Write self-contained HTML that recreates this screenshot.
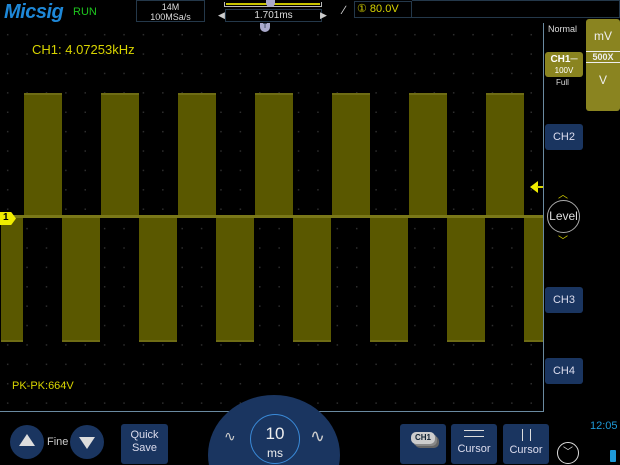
<!DOCTYPE html>
<html><head><style>
*{margin:0;padding:0;box-sizing:border-box}
html,body{width:620px;height:465px;overflow:hidden;background:#000}
#w{width:620px;height:465px;position:relative;overflow:hidden;font-family:"Liberation Sans",sans-serif}
.a{position:absolute}
.top{background:#5a5800;border-top:2px solid #6e6c14}
.bot{background:#5a5800;border-bottom:2px solid #6e6c14}
.btn{position:absolute;background:#1a3560;border-radius:3px;color:#dde;font-size:11px;text-align:center}
</style></head><body><div id="w">
<div class="a" style="left:4px;top:1px;font:italic bold 20px 'Liberation Sans';color:#1e88d8;letter-spacing:-0.5px">Micsig</div>
<div class="a" style="left:73px;top:6px;font-size:11px;color:#1ec41e">RUN</div>
<div class="a" style="left:136px;top:0;width:69px;height:22px;border:1px solid #24384a;font-size:9px;color:#ddd;text-align:center;line-height:10px;padding-top:1px">14M<br>100MSa/s</div>
<div class="a" style="left:224px;top:2px;width:98px;height:5px;border:1px solid #bbb;border-top:none"></div>
<div class="a" style="left:226px;top:3px;width:94px;height:2px;background:#c8c400"></div>
<div class="a" style="left:225px;top:9px;width:97px;height:13px;border:1px solid #24384a;font-size:10px;color:#ddd;text-align:center;line-height:12px">1.701ms</div>
<div class="a" style="left:218px;top:10px;color:#ccc;font-size:9px">◀</div>
<div class="a" style="left:320px;top:10px;color:#ccc;font-size:9px">▶</div>
<div class="a" style="left:266px;top:0;width:9px;height:7px;background:#aac;border-radius:0 0 4px 4px"></div>
<div class="a" style="left:343px;top:3px;color:#ddd;font-size:12px">∕</div>
<div class="a" style="left:354px;top:1px;width:58px;height:17px;border:1px solid #24384a;color:#d8d400;font-size:11px;padding-left:2px;white-space:nowrap;line-height:15px">① 80.0V</div>
<div class="a" style="left:412px;top:0;width:208px;height:18px;border:1px solid #24384a;border-left:none"></div>
<div class="a" style="left:0;top:23px;width:544px;height:389px;border-right:1px solid #6a8aa0;border-bottom:1px solid #6a8aa0;background-image:radial-gradient(circle,#2e2e2e 0.7px,transparent 1px);background-size:19.4px 19.4px;background-position:-2px 2px"></div>
<div class="a" style="left:260px;top:23px;width:10px;height:9px;background:#aac;border-radius:0 0 5px 5px;font-size:7px;text-align:center;color:#123">T</div>
<div class="a" style="left:32px;top:42px;color:#d8d400;font-size:13px">CH1: 4.07253kHz</div>
<div class="a" style="left:12px;top:380px;color:#d8d400;font-size:11px">PK-PK:664V</div>
<div class="a top" style="left:24px;top:93px;width:38px;height:124px"></div>
<div class="a top" style="left:101px;top:93px;width:38px;height:124px"></div>
<div class="a top" style="left:178px;top:93px;width:38px;height:124px"></div>
<div class="a top" style="left:255px;top:93px;width:38px;height:124px"></div>
<div class="a top" style="left:332px;top:93px;width:38px;height:124px"></div>
<div class="a top" style="left:409px;top:93px;width:38px;height:124px"></div>
<div class="a top" style="left:486px;top:93px;width:38px;height:124px"></div>
<div class="a bot" style="left:1px;top:218px;width:22px;height:124px"></div>
<div class="a bot" style="left:62px;top:218px;width:38px;height:124px"></div>
<div class="a bot" style="left:139px;top:218px;width:38px;height:124px"></div>
<div class="a bot" style="left:216px;top:218px;width:38px;height:124px"></div>
<div class="a bot" style="left:293px;top:218px;width:38px;height:124px"></div>
<div class="a bot" style="left:370px;top:218px;width:38px;height:124px"></div>
<div class="a bot" style="left:447px;top:218px;width:38px;height:124px"></div>
<div class="a bot" style="left:524px;top:218px;width:19px;height:124px"></div>
<div class="a" style="left:0;top:215px;width:543px;height:3px;background:#7a7818"></div>
<div class="a" style="left:0;top:212px;width:16px;height:13px;background:#f0ec00;clip-path:polygon(0 0,70% 0,100% 50%,70% 100%,0 100%);font:bold 10px 'Liberation Sans';color:#000;padding-left:3px">1</div>
<div class="a" style="left:530px;top:181px;width:0;height:0;border:6px solid transparent;border-right:8px solid #f0ec00;border-left:none"></div>
<div class="a" style="left:537px;top:186px;width:6px;height:2px;background:#d8d400"></div>
<div class="a" style="left:548px;top:24px;color:#ddd;font-size:9px">Normal</div>
<div class="a" style="left:586px;top:19px;width:34px;height:92px;background:#8a8420;border-radius:3px;color:#eee;font-size:12px;text-align:center">
<div style="padding-top:10px">mV</div><div style="margin-top:8px;border-top:1px solid #eee;border-bottom:1px solid #eee;font-size:9px;font-weight:bold;line-height:10px">500X</div><div style="margin-top:10px">V</div></div>
<div class="a" style="left:545px;top:52px;width:38px;height:25px;background:#8a8420;border-radius:3px;color:#fff;text-align:center;font:bold 10px 'Liberation Sans';line-height:11px;padding-top:2px">CH1─<br><span style="font-weight:normal;font-size:8px">100V</span></div>
<div class="a" style="left:556px;top:78px;color:#ddd;font-size:8px">Full</div>
<div class="btn" style="left:545px;top:124px;width:38px;height:26px;line-height:26px">CH2</div>
<div class="btn" style="left:545px;top:287px;width:38px;height:26px;line-height:26px">CH3</div>
<div class="btn" style="left:545px;top:358px;width:38px;height:26px;line-height:26px">CH4</div>
<div class="a" style="left:558px;top:186px;color:#d8d400;font-size:10px">︿</div>
<div class="a" style="left:547px;top:200px;width:33px;height:33px;border:1px solid #aaa;border-radius:50%;color:#ddd;font-size:12px;text-align:center;line-height:31px">Level</div>
<div class="a" style="left:558px;top:232px;color:#d8d400;font-size:10px">﹀</div>
<div class="a" style="left:10px;top:425px;width:34px;height:34px;border-radius:50%;background:#1a3560"></div>
<div class="a" style="left:19px;top:434px;border:8px solid transparent;border-bottom:12px solid #ddd;border-top:none"></div>
<div class="a" style="left:47px;top:436px;color:#ccc;font-size:11px">Fine</div>
<div class="a" style="left:70px;top:425px;width:34px;height:34px;border-radius:50%;background:#1a3560"></div>
<div class="a" style="left:79px;top:437px;border:8px solid transparent;border-top:12px solid #ddd;border-bottom:none"></div>
<div class="btn" style="left:121px;top:424px;width:47px;height:40px;font-size:11px;padding-top:5px;line-height:13px">Quick<br>Save</div>
<div class="a" style="left:208px;top:395px;width:132px;height:70px;overflow:hidden"><div style="width:132px;height:120px;border-radius:50%;background:#1a3560"></div></div>
<div class="a" style="left:250px;top:414px;width:50px;height:50px;border-radius:50%;border:1px solid #3a8ad8;color:#eee;text-align:center;font-size:17px;line-height:18px;padding-top:10px">10<br><span style="font-size:12px">ms</span></div>
<div class="a" style="left:224px;top:428px;color:#ccc;font-size:14px">∿</div>
<div class="a" style="left:310px;top:426px;color:#ccc;font-size:18px">∿</div>
<div class="btn" style="left:400px;top:424px;width:46px;height:40px"><div style="margin:8px auto 0;width:24px;height:12px;background:#ccc;border-radius:5px;color:#123;font-size:8px;font-weight:bold;line-height:12px;box-shadow:2px 2px 0 #888,4px 4px 0 #666">CH1</div></div>
<div class="btn" style="left:451px;top:424px;width:46px;height:40px;padding-top:3px"><div style="margin:3px auto 0;width:20px;height:7px;border-top:1px solid #ddd;border-bottom:1px solid #ddd"></div><div style="margin-top:6px">Cursor</div></div>
<div class="btn" style="left:503px;top:424px;width:46px;height:40px;padding-top:3px"><div style="margin:2px auto 0;width:9px;height:12px;border-left:1px solid #ddd;border-right:1px solid #ddd"></div><div style="margin-top:3px">Cursor</div></div>
<div class="a" style="left:557px;top:442px;width:22px;height:22px;border-radius:50%;border:1px solid #ddd;color:#ddd;font-size:10px;text-align:center;line-height:20px">﹀</div>
<div class="a" style="left:590px;top:420px;color:#1e9ad8;font-size:11px">12:05</div>
<div class="a" style="left:610px;top:450px;width:6px;height:12px;background:#1e9ad8;border-radius:1px"></div>
</div></body></html>
